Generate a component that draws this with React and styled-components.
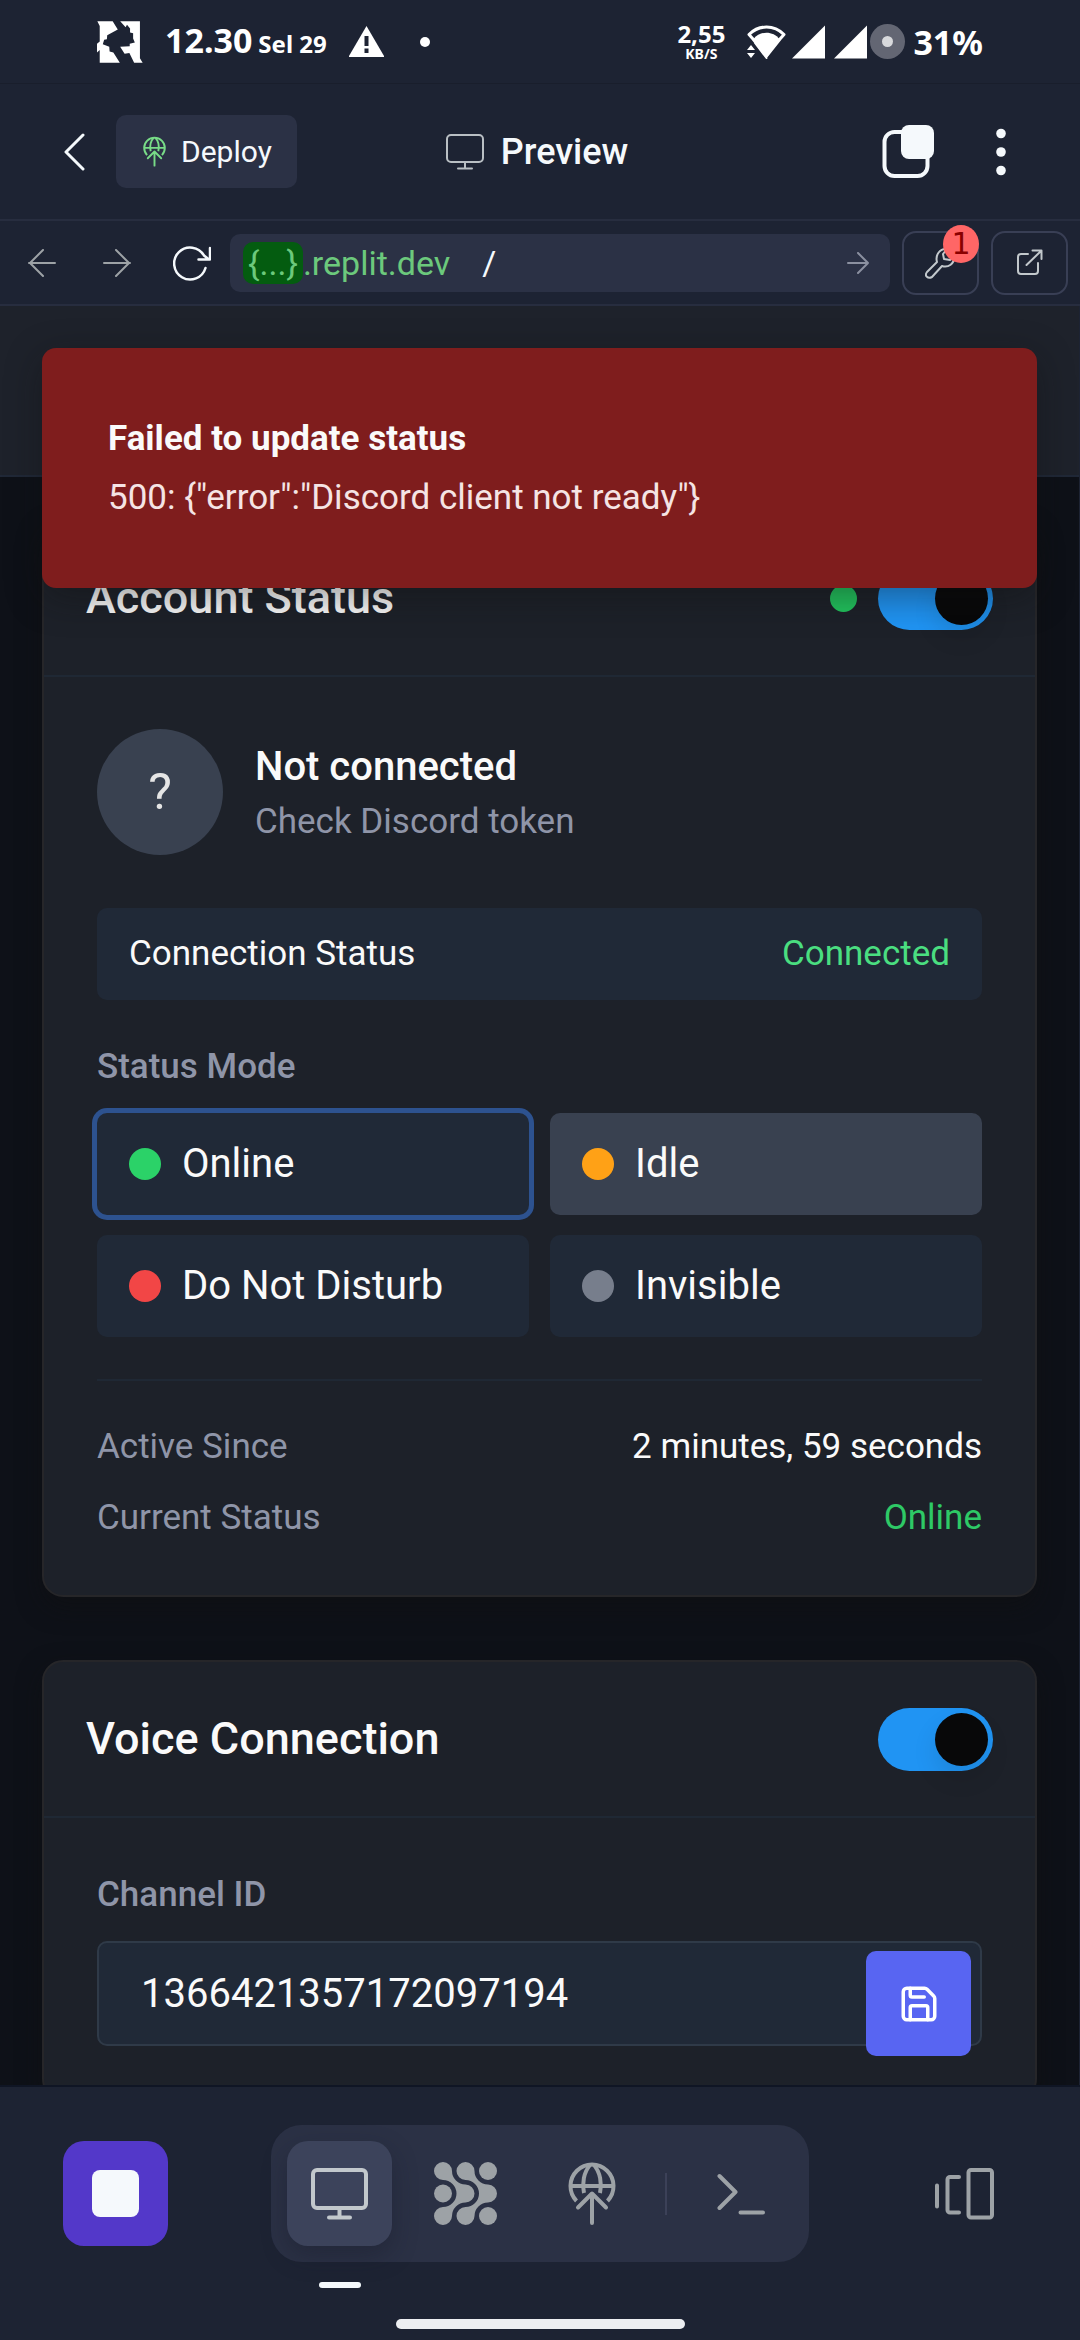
import React, { useState } from "react";
import styled, { createGlobalStyle, css } from "styled-components";
import { Save } from "lucide-react";

const uiFont = `Roboto, "Noto Sans", sans-serif`;
const systemFont = `"Noto Sans", Roboto, sans-serif`;

const c = {
  shell: "#1d2333",
  shellRaised: "#2b3145",
  shellActive: "#3c435b",
  shellLine: "#272d3f",
  shellText: "#f5f9fc",
  shellMuted: "#9da2a6",
  page: "#0e1118",
  card: "#1d2129",
  cardLine: "#262629",
  field: "#202937",
  raised: "#394150",
  text: "#fafafa",
  muted: "#8f95a8",
};

const GlobalStyle = createGlobalStyle`
  *, *::before, *::after { box-sizing: border-box; }
  body { margin: 0; background: ${c.shell}; font-family: ${uiFont}; }
  button, input { font: inherit; color: inherit; }
  h2, p { margin: 0; }
`;

const Screen = styled.div`
  display: flex;
  flex-direction: column;
  height: 100vh;
  overflow: hidden;
  background: ${c.shell};
  color: ${c.shellText};
`;

const bareButton = css`
  display: flex;
  align-items: center;
  justify-content: center;
  flex: none;
  padding: 0;
  border: 0;
  background: none;
  cursor: pointer;
`;

/* system status bar */

const StatusBar = styled.div`
  display: flex;
  align-items: center;
  justify-content: space-between;
  flex: none;
  height: 84px;
  padding: 0 97px;
  border-bottom: 1px solid #191e2c;
  color: #fff;
  font-family: ${systemFont};
  font-weight: 700;
`;

const StatusSide = styled.div`
  display: flex;
  align-items: center;
`;

const Clock = styled.div`
  display: flex;
  align-items: baseline;
  gap: 6px;
  margin: 0 22px;
  font-size: 34px;
  line-height: 42px;
`;

const SmallText = styled.span`
  font-size: 24px;
`;

const NotificationDot = styled.span`
  width: 10px;
  height: 10px;
  margin-left: 36px;
  border-radius: 50%;
  background: #fff;
`;

const NetSpeed = styled.div`
  display: flex;
  flex-direction: column;
  align-items: center;
  margin-right: 22px;
  font-size: 24px;
  line-height: 24px;
`;

const NetUnit = styled.span`
  font-size: 14px;
  line-height: 16px;
`;

const BatteryRing = styled.span`
  display: grid;
  place-items: center;
  width: 35px;
  height: 35px;
  border-radius: 50%;
  background: #636673;

  &::after {
    content: "";
    width: 11px;
    height: 11px;
    border-radius: 50%;
    background: #d8d9dc;
  }
`;

const BatteryText = styled.span`
  margin-left: 8px;
  font-size: 34px;
  line-height: 42px;
`;

/* workspace header */

const Header = styled.header`
  display: grid;
  grid-template-columns: 1fr auto 1fr;
  align-items: center;
  flex: none;
  height: 137px;
  padding: 0 53px 0 47px;
  border-bottom: 2px solid ${c.shellLine};
`;

const HeaderSide = styled.div`
  display: flex;
  align-items: center;
  gap: ${(p) => p.$gap}px;
  justify-content: ${(p) => (p.$end ? "flex-end" : "flex-start")};
`;

const IconButton = styled.button`
  ${bareButton}
  width: 53px;
  height: 53px;
  color: ${(p) => (p.$muted ? c.shellMuted : c.shellText)};
`;

const DeployButton = styled.button`
  ${bareButton}
  gap: 15px;
  height: 73px;
  padding: 0 25px 0 27px;
  border-radius: 10px;
  background: ${c.shellRaised};
  font-size: 30px;
`;

const Title = styled.div`
  display: flex;
  align-items: center;
  gap: 17px;
  font-size: 36px;
  font-weight: 500;
  line-height: 50px;
`;

/* address bar */

const AddressBar = styled.div`
  display: flex;
  align-items: center;
  gap: 12px;
  flex: none;
  height: 85px;
  padding: 0 12px 0 15px;
  border-bottom: 2px solid ${c.shellLine};
`;

const NavButtons = styled.div`
  display: flex;
  gap: 22px;
`;

const AddressField = styled.div`
  display: flex;
  align-items: center;
  flex: 1;
  min-width: 0;
  height: 58px;
  padding: 0 10px 0 13px;
  border-radius: 10px;
  background: ${c.shellRaised};
  color: #6cc97c;
  font-size: 34px;
  line-height: 42px;
`;

const HostChip = styled.span`
  padding: 0 5px;
  border-radius: 10px;
  background: #045c10;
`;

const PathInput = styled.input`
  flex: 1;
  min-width: 0;
  margin-left: 32px;
  padding: 0;
  border: 0;
  outline: 0;
  background: none;
  color: ${c.shellText};
`;

const GoButton = styled.button`
  ${bareButton}
  width: 44px;
  height: 44px;
  color: #8b90a0;
`;

const OutlineButton = styled.button`
  ${bareButton}
  position: relative;
  width: 77px;
  height: 64px;
  border: 2px solid #393f55;
  border-radius: 14px;
  color: #c2c8cc;
`;

const Badge = styled.span`
  position: absolute;
  top: -8px;
  right: -2px;
  width: 36px;
  height: 38px;
  border-radius: 50%;
  background: #ff6666;
  color: #8a0000;
  font-family: "DejaVu Sans", sans-serif;
  font-size: 30px;
  line-height: 37px;
  text-align: center;
`;

/* previewed page */

const Preview = styled.main`
  position: relative;
  flex: 1;
  min-height: 0;
  margin-right: 1px;
  overflow: hidden;
  background: ${c.page};
  color: ${c.text};
`;

const PageHeader = styled.div`
  height: 171px;
  border-bottom: 2px solid #202837;
  background: #1e222b;
`;

const Cards = styled.div`
  display: flex;
  flex-direction: column;
  gap: 63px;
  padding: 42px;
`;

const Card = styled.section`
  border: 2px solid ${c.cardLine};
  border-radius: 21px;
  background: ${c.card};
  box-shadow: 0 10px 24px rgba(16, 16, 16, 0.5);
`;

const CardHeader = styled.div`
  display: flex;
  align-items: center;
  justify-content: space-between;
  padding: 42px;
  border-bottom: 2px solid #1f2834;
`;

const CardTitle = styled.h2`
  font-size: 45px;
  font-weight: 500;
  line-height: 70px;
`;

const CardActions = styled.div`
  display: flex;
  align-items: center;
  gap: 21px;
`;

const CardBody = styled.div`
  padding: 52px 53px;
`;

const Dot = styled.span`
  flex: none;
  width: ${(p) => p.$size}px;
  height: ${(p) => p.$size}px;
  border-radius: 50%;
  background: ${(p) => p.$color};
`;

const Switch = styled.input.attrs({ type: "checkbox", role: "switch" })`
  appearance: none;
  display: flex;
  align-items: center;
  justify-content: ${(p) => (p.checked ? "flex-end" : "flex-start")};
  width: 115px;
  height: 63px;
  margin: 0;
  padding: 5px;
  border-radius: 32px;
  background: ${(p) => (p.checked ? "#2094f3" : c.raised)};
  cursor: pointer;

  &::after {
    content: "";
    width: 53px;
    height: 53px;
    border-radius: 50%;
    background: #080809;
    box-shadow: 0 12px 24px rgba(0, 0, 0, 0.1);
  }
`;

const Profile = styled.div`
  display: flex;
  align-items: center;
  gap: 32px;
  margin-bottom: 53px;
`;

const Avatar = styled.div`
  display: grid;
  place-items: center;
  width: 126px;
  height: 126px;
  border-radius: 50%;
  background: ${c.raised};
  color: #e5e5e5;
  font-size: 50px;
`;

const ProfileName = styled.p`
  font-size: 40px;
  font-weight: 500;
  line-height: 60px;
`;

const ProfileNote = styled.p`
  color: ${c.muted};
  font-size: 35px;
  line-height: 50px;
`;

const ConnectionRow = styled.div`
  display: flex;
  justify-content: space-between;
  margin-bottom: 42px;
  padding: 21px 32px;
  border-radius: 10px;
  background: ${c.field};
  font-size: 35px;
  line-height: 50px;
`;

const Good = styled.span`
  color: ${(p) => p.$color};
`;

const FieldLabel = styled.label`
  display: block;
  margin-bottom: 21px;
  color: ${c.muted};
  font-size: 35px;
  font-weight: 500;
  line-height: 50px;
`;

const Modes = styled.div`
  display: grid;
  grid-template-columns: 1fr 1fr;
  gap: 20px 21px;
`;

const ModeButton = styled.button`
  display: flex;
  align-items: center;
  gap: 21px;
  padding: 21px 32px;
  border: 0;
  border-radius: 10px;
  background: ${(p) => (p.$active ? c.raised : c.field)};
  box-shadow: ${(p) => (p.$focused ? "0 0 0 5px #2d528f" : "none")};
  font-size: 40px;
  line-height: 60px;
  cursor: pointer;
`;

const Facts = styled.div`
  display: flex;
  flex-direction: column;
  gap: 21px;
  margin-top: 42px;
  padding-top: 41px;
  border-top: 2px solid #1f2834;
  font-size: 35px;
  line-height: 50px;
`;

const Fact = styled.div`
  display: flex;
  justify-content: space-between;
`;

const FactName = styled.span`
  color: ${c.muted};
`;

const InputBox = styled.div`
  position: relative;
`;

const ChannelInput = styled.input`
  display: block;
  width: 100%;
  height: 105px;
  padding: 0 126px 0 42px;
  border: 2px solid #2f3a48;
  border-radius: 10px;
  outline: 0;
  background: ${c.field};
  font-size: 40px;
`;

const SaveButton = styled.button`
  ${bareButton}
  position: absolute;
  top: 10px;
  right: 11px;
  width: 105px;
  height: 105px;
  border-radius: 10px;
  background: #5865f2;
  color: #fff;
`;

const Toast = styled.div`
  position: absolute;
  top: 42px;
  left: 42px;
  right: 42px;
  padding: 66px 66px 63px;
  border-radius: 14px;
  background: #7f1d1d;
  box-shadow: 0 10px 36px rgba(16, 16, 16, 0.4);
  font-size: 35px;
`;

const ToastTitle = styled.p`
  font-weight: 700;
  line-height: 50px;
`;

const ToastText = styled.p`
  margin-top: 7px;
  color: #f5e4e4;
  line-height: 54px;
`;

/* workspace dock */

const Dock = styled.footer`
  flex: none;
  padding: 38px 63px 11px;
  border-top: 2px solid #0f1524;
`;

const DockRow = styled.nav`
  display: flex;
  align-items: center;
  justify-content: space-between;
`;

const StopButton = styled.button`
  ${bareButton}
  width: 105px;
  height: 105px;
  border-radius: 21px;
  background: #5338c9;

  &::after {
    content: "";
    width: 47px;
    height: 47px;
    border-radius: 8px;
    background: ${c.shellText};
  }
`;

const Tabs = styled.div`
  display: flex;
  align-items: center;
  gap: 21px;
  padding: 16px;
  border-radius: 31px;
  background: ${c.shellRaised};
`;

const TabButton = styled.button`
  ${bareButton}
  position: relative;
  width: 105px;
  height: 105px;
  border-radius: 21px;
  color: ${c.shellMuted};

  ${(p) =>
    p.$active &&
    css`
      background: ${c.shellActive};
      color: #c2c8cc;
      box-shadow: 0 10px 24px rgba(20, 24, 36, 0.35);

      &::after {
        content: "";
        position: absolute;
        top: 141px;
        width: 42px;
        height: 6px;
        border-radius: 3px;
        background: ${c.shellText};
      }
    `}
`;

const TabDivider = styled.span`
  width: 2px;
  height: 42px;
  background: #3c4158;
`;

const HomeBar = styled.div`
  width: 289px;
  height: 10px;
  margin: 57px auto 0;
  border-radius: 5px;
  background: #eceef1;
`;

/* icons */

const Icon = ({ w, h, box, sw = 3, fill = "none", children }) => (
  <svg
    width={w}
    height={h}
    viewBox={box || `0 0 ${w} ${h}`}
    fill={fill}
    stroke={fill === "none" ? "currentColor" : "none"}
    strokeWidth={sw}
    strokeLinecap="round"
    strokeLinejoin="round"
    aria-hidden="true"
  >
    {children}
  </svg>
);

const BrandMark = () => (
  <svg width="46" height="42" viewBox="282 65 135 127" preserveAspectRatio="none" fill="#fff" aria-hidden="true">
    <path d="M283 66H328L343 91L312 108L311 120L303 122L299 135L318 143L319 157L330 160L349 191H290V153L282 160V134L290 127V80Z" />
    <path d="M350 66H408V178L416 191H391L377 162L363 164L350 143L378 141L378 134L393 130L388 118V102L379 100V88L370 76L366 84Z" />
  </svg>
);

const WarningIcon = () => (
  <Icon w={35} h={31} fill="#fff">
    <path d="M17.5 0 35 30V31H0V30Z" />
    <path fill={c.shell} d="M15.5 10h4v10h-4zM15.5 22.5h4v4.5h-4z" />
  </Icon>
);

const WifiIcon = () => (
  <Icon w={39} h={34} fill="#fff">
    <path d="M2 9.5C12-.5 27-.5 37 9.5L33 14 19.5 31 6 14Z" fill="none" stroke="#fff" strokeWidth="3" />
    <path d="M6.5 14C13 5.5 26 5.5 32.5 14L19.5 33Z" />
    <path d="M0 18h8l6 9v7H0Z" fill={c.shell} />
    <path d="M8 18 19.5 33" stroke="#fff" strokeWidth="2" />
    <path d="M0 25 4 20 8 25ZM0 28H8L4 33Z" />
  </Icon>
);

const SignalIcon = () => (
  <Icon w={42} h={34} fill="#fff">
    <path d="M6 33.5 39 .5V33.5Z" />
  </Icon>
);

const MonitorIcon = ({ w, h, sw }) => (
  <Icon w={w} h={h} box="0 0 57 52" sw={sw}>
    <rect x="2" y="2" width="53" height="38" rx="4" />
    <path d="M28.5 40V49.5M18 49.5H39" />
  </Icon>
);

const DeployIcon = ({ w, h }) => (
  <Icon w={w} h={h} box="0 0 48 63" sw={4}>
    <path strokeLinecap="butt" d="M8.5 39A21.5 21.5 0 1 1 39.5 39" />
    <path strokeLinecap="butt" d="M22.5 2.5C15.5 10 14 22 16 31M25.5 2.5C32.5 10 34 22 32 31M2.5 24H45.5" />
    <path d="M24 32V61M10 45.5 24 31.5 38 45.5" />
  </Icon>
);

const DeployMark = styled.span`
  display: flex;
  color: #78dc87;
`;

const GridIcon = () => (
  <Icon w={63} h={63} fill="currentColor">
    {[0, 22.5].map((x) => (
      <path
        key={x}
        transform={`translate(${x} 0)`}
        d="M9 0A9 9 0 0 1 18 9A13.5 13.5 0 0 0 31.5 22.5A9 9 0 0 1 31.5 40.5A13.5 13.5 0 0 0 18 54A9 9 0 1 1 9 45A13.5 13.5 0 0 0 9 18A9 9 0 1 1 9 0Z"
      />
    ))}
    <circle cx="9" cy="31.5" r="9" />
    <circle cx="54" cy="9" r="9" />
    <circle cx="54" cy="54" r="9" />
  </Icon>
);

const MODES = [
  { name: "Online", color: "#2bd268" },
  { name: "Idle", color: "#ffa116" },
  { name: "Do Not Disturb", color: "#f24646" },
  { name: "Invisible", color: "#777e8c" },
];

export default function App() {
  const [accountOn, setAccountOn] = useState(true);
  const [voiceOn, setVoiceOn] = useState(true);
  const [mode, setMode] = useState("Idle");
  const [path, setPath] = useState("/");
  const [channel, setChannel] = useState("1366421357172097194");

  return (
    <Screen>
      <GlobalStyle />

      <StatusBar>
        <StatusSide>
          <BrandMark />
          <Clock>
            12.30 <SmallText>Sel 29</SmallText>
          </Clock>
          <WarningIcon />
          <NotificationDot />
        </StatusSide>
        <StatusSide>
          <NetSpeed>
            2,55
            <NetUnit>KB/S</NetUnit>
          </NetSpeed>
          <WifiIcon />
          <SignalIcon />
          <SignalIcon />
          <BatteryRing />
          <BatteryText>31%</BatteryText>
        </StatusSide>
      </StatusBar>

      <Header>
        <HeaderSide $gap={16}>
          <IconButton aria-label="Back">
            <Icon w={22} h={38}>
              <path d="M20 2 3 19 20 36" />
            </Icon>
          </IconButton>
          <DeployButton>
            <DeployMark>
              <DeployIcon w={23} h={31} />
            </DeployMark>
            Deploy
          </DeployButton>
        </HeaderSide>
        <Title>
          <Icon w={38} h={36} sw={2}>
            <rect x="1" y="1" width="36" height="27" rx="4" stroke="#b9bfc4" />
            <path d="M19 28V34M12 34.5H26" stroke="#b9bfc4" />
          </Icon>
          Preview
        </Title>
        <HeaderSide $gap={40} $end>
          <IconButton aria-label="Tabs">
            <Icon w={52} h={53} sw={4}>
              <rect x="2.5" y="7" width="43" height="44" rx="10" />
              <rect x="19" y="0" width="33" height="34" rx="8" fill="currentColor" stroke="none" />
            </Icon>
          </IconButton>
          <IconButton aria-label="More">
            <Icon w={10} h={48} fill="currentColor">
              <circle cx="5" cy="5.5" r="4.8" />
              <circle cx="5" cy="24" r="4.8" />
              <circle cx="5" cy="42.5" r="4.8" />
            </Icon>
          </IconButton>
        </HeaderSide>
      </Header>

      <AddressBar>
        <NavButtons>
          <IconButton $muted aria-label="Previous page">
            <Icon w={28} h={28} sw={2}>
              <path d="M27 14H1M15 1 2 14 15 27" />
            </Icon>
          </IconButton>
          <IconButton $muted aria-label="Next page">
            <Icon w={28} h={28} sw={2}>
              <path d="M1 14H27M13 1 26 14 13 27" />
            </Icon>
          </IconButton>
          <IconButton aria-label="Reload">
            <Icon w={38} h={36} sw={2.5}>
              <path d="M32.5 23A16 16 0 1 1 31 10.5L36 14.5M37 3V14.5H25.5" />
            </Icon>
          </IconButton>
        </NavButtons>
        <AddressField>
          <HostChip>{"{...}"}</HostChip>
          <span>.replit.dev</span>
          <PathInput aria-label="Path" value={path} onChange={(e) => setPath(e.target.value)} />
          <GoButton aria-label="Go">
            <Icon w={22} h={22} sw={2}>
              <path d="M1 11H21M11 1 21 11 11 21" />
            </Icon>
          </GoButton>
        </AddressField>
        <OutlineButton aria-label="Developer tools">
          <Icon w={32} h={32} sw={2}>
            <path d="M2 25 12 15C10 8 15 1 22 2L18 7L19 12L25 13L29 9C30 17 23 21 17 19L7 30C3 32-1 29 2 25Z" />
          </Icon>
          <Badge>1</Badge>
        </OutlineButton>
        <OutlineButton aria-label="Open in new tab">
          <Icon w={26} h={27} sw={2}>
            <path d="M11 5H4A3 3 0 0 0 1 8V22A3 3 0 0 0 4 25H18A3 3 0 0 0 21 22V14M9.5 16 24 2M15.5 1.5H24.5V10" />
          </Icon>
        </OutlineButton>
      </AddressBar>

      <Preview>
        <PageHeader />
        <Cards>
          <Card>
            <CardHeader>
              <CardTitle>
                <label htmlFor="account-switch">Account Status</label>
              </CardTitle>
              <CardActions>
                <Dot $size={27} $color="#22c55e" />
                <Switch
                  id="account-switch"
                  checked={accountOn}
                  onChange={(e) => setAccountOn(e.target.checked)}
                />
              </CardActions>
            </CardHeader>
            <CardBody>
              <Profile>
                <Avatar>?</Avatar>
                <div>
                  <ProfileName>Not connected</ProfileName>
                  <ProfileNote>Check Discord token</ProfileNote>
                </div>
              </Profile>
              <ConnectionRow>
                <span>Connection Status</span>
                <Good $color="#4ade80">Connected</Good>
              </ConnectionRow>
              <FieldLabel as="div" id="mode-label">
                Status Mode
              </FieldLabel>
              <Modes role="group" aria-labelledby="mode-label">
                {MODES.map((m) => (
                  <ModeButton
                    key={m.name}
                    aria-pressed={mode === m.name}
                    $active={mode === m.name}
                    $focused={m.name === "Online"}
                    onClick={() => setMode(m.name)}
                  >
                    <Dot $size={32} $color={m.color} />
                    {m.name}
                  </ModeButton>
                ))}
              </Modes>
              <Facts>
                <Fact>
                  <FactName>Active Since</FactName>
                  <span>2 minutes, 59 seconds</span>
                </Fact>
                <Fact>
                  <FactName>Current Status</FactName>
                  <Good $color="#2ec966">Online</Good>
                </Fact>
              </Facts>
            </CardBody>
          </Card>

          <Card>
            <CardHeader>
              <CardTitle>
                <label htmlFor="voice-switch">Voice Connection</label>
              </CardTitle>
              <Switch id="voice-switch" checked={voiceOn} onChange={(e) => setVoiceOn(e.target.checked)} />
            </CardHeader>
            <CardBody>
              <FieldLabel htmlFor="channel-id">Channel ID</FieldLabel>
              <InputBox>
                <ChannelInput id="channel-id" value={channel} onChange={(e) => setChannel(e.target.value)} />
                <SaveButton aria-label="Save channel">
                  <Save size={42} strokeWidth={2} />
                </SaveButton>
              </InputBox>
            </CardBody>
          </Card>
        </Cards>

        <Toast role="alert">
          <ToastTitle>Failed to update status</ToastTitle>
          <ToastText>{'500: {"error":"Discord client not ready"}'}</ToastText>
        </Toast>
      </Preview>

      <Dock>
        <DockRow>
          <StopButton aria-label="Stop" />
          <Tabs>
            <TabButton $active aria-label="Preview">
              <MonitorIcon w={57} h={52} sw={4} />
            </TabButton>
            <TabButton aria-label="Assistant">
              <GridIcon />
            </TabButton>
            <TabButton aria-label="Deployments">
              <DeployIcon w={48} h={63} />
            </TabButton>
            <TabDivider />
            <TabButton aria-label="Shell">
              <Icon w={48} h={42} sw={4}>
                <path d="M2.5 3 18.5 19 2.5 35M23.5 39.5H46" />
              </Icon>
            </TabButton>
          </Tabs>
          <TabButton aria-label="All tabs">
            <Icon w={59} h={52} sw={4}>
              <rect x="33.5" y="2" width="23.5" height="47.5" rx="2.5" />
              <path d="M24 9H15A2.5 2.5 0 0 0 12.5 11.5V42A2.5 2.5 0 0 0 15 44.5H24M2 17.5V38.5" />
            </Icon>
          </TabButton>
        </DockRow>
        <HomeBar />
      </Dock>
    </Screen>
  );
}
